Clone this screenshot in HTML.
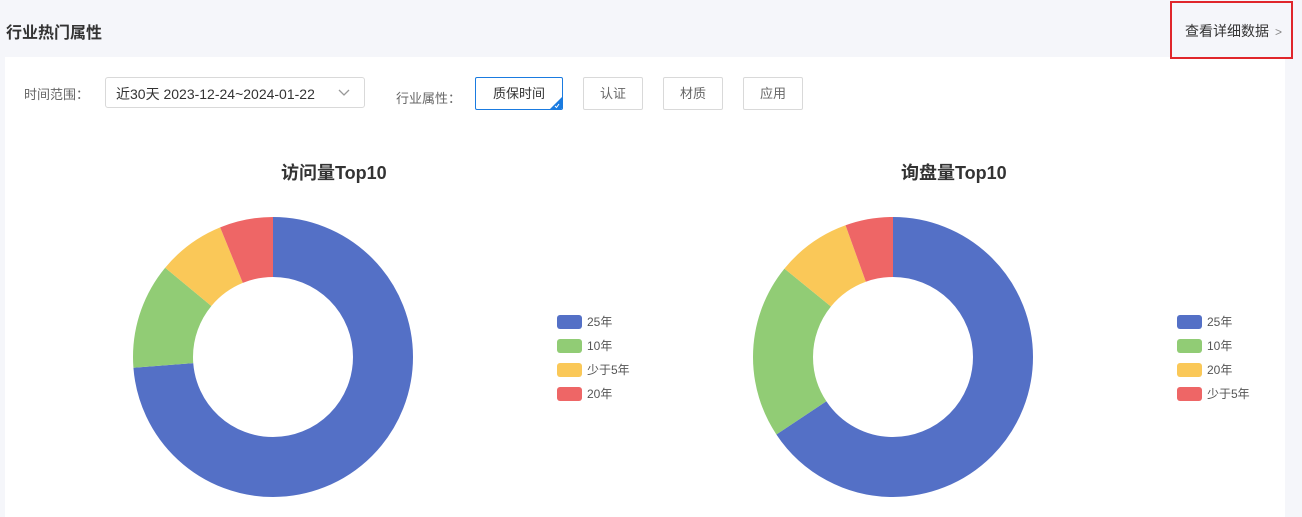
<!DOCTYPE html>
<html><head><meta charset="utf-8"><style>
*{margin:0;padding:0;box-sizing:border-box}
body{width:1302px;height:507px;overflow:hidden;background:#f5f6fa;font-family:"Liberation Sans","Noto Sans CJK SC",sans-serif;position:relative;color:#333}
.title{position:absolute;left:6px;top:19px;font-size:16px;font-weight:bold;color:#333}
.more{position:absolute;left:1170px;top:1px;width:123px;height:58px;border:2px solid #e0262b;font-size:14px;color:#333;padding:18px 0 0 13px;z-index:5}
.more span{color:#888;margin-left:6px;font-size:12px}
.panel{position:absolute;left:5px;top:57px;width:1280px;height:460px;background:#fff}
.lbl{position:absolute;font-size:13px;color:#666;top:88px}
.sel{position:absolute;left:105px;top:77px;width:260px;height:31px;border:1px solid #d9d9d9;border-radius:3px;font-size:14px;color:#333;padding:6px 0 0 10px}
.btn{position:absolute;top:77px;height:33px;border:1px solid #d9d9d9;border-radius:2px;font-size:13px;color:#666;text-align:center;line-height:31px}
.act{border-color:#1a7be0;color:#333;overflow:hidden}
.ct{position:absolute;top:159px;font-size:18px;font-weight:bold;color:#333}
.lg{position:absolute;font-size:12px;color:#555}
.lg div{height:24px;position:relative;padding-left:30px;line-height:14px}
.lg i{position:absolute;left:0;top:0;width:25px;height:14px;border-radius:3px}
</style></head><body>
<div class="title">行业热门属性</div>
<div class="panel"></div>
<div class="more">查看详细数据<span>&gt;</span></div>
<div class="lbl" style="left:24px;top:84px">时间范围：</div>
<div class="sel">近30天 2023-12-24~2024-01-22<svg style="position:absolute;right:14px;top:11px" width="12" height="8"><path d="M1 1l5 5 5-5" fill="none" stroke="#999" stroke-width="1.3"/></svg></div>
<div class="lbl" style="left:396px">行业属性：</div>
<div class="btn act" style="left:475px;width:88px;">质保时间<svg style="position:absolute;right:0;bottom:0" width="12" height="12"><path d="M12 0L12 12L0 12Z" fill="#1a7be0"/><path d="M5 9l1.5 1.5L9 7" stroke="#fff" fill="none" stroke-width="1"/></svg></div>
<div class="btn" style="left:583px;width:60px">认证</div>
<div class="btn" style="left:663px;width:60px">材质</div>
<div class="btn" style="left:743px;width:60px">应用</div>
<div class="ct" style="left:281px">访问量Top10</div>
<div class="ct" style="left:901px">询盘量Top10</div>
<svg style="position:absolute;left:0;top:0" width="1302" height="507">
<g transform="rotate(-90 273 357)" fill="none" stroke-width="60">
<circle cx="273" cy="357" r="110" stroke="#5470c6" stroke-dasharray="509.7 691.15" stroke-dashoffset="0"/>
<circle cx="273" cy="357" r="110" stroke="#91cc75" stroke-dasharray="84.5 691.15" stroke-dashoffset="-509.7"/>
<circle cx="273" cy="357" r="110" stroke="#fac858" stroke-dasharray="54.1 691.15" stroke-dashoffset="-594.2"/>
<circle cx="273" cy="357" r="110" stroke="#ee6666" stroke-dasharray="42.85 691.15" stroke-dashoffset="-648.3"/>
</g>
<g transform="rotate(-90 893 357)" fill="none" stroke-width="60">
<circle cx="893" cy="357" r="110" stroke="#5470c6" stroke-dasharray="453.7 691.15" stroke-dashoffset="0"/>
<circle cx="893" cy="357" r="110" stroke="#91cc75" stroke-dasharray="139.6 691.15" stroke-dashoffset="-453.7"/>
<circle cx="893" cy="357" r="110" stroke="#fac858" stroke-dasharray="59.5 691.15" stroke-dashoffset="-593.3"/>
<circle cx="893" cy="357" r="110" stroke="#ee6666" stroke-dasharray="38.35 691.15" stroke-dashoffset="-652.8"/>
</g>
</svg>
<div class="lg" style="left:557px;top:315px"><div><i style="background:#5470c6"></i>25年</div><div><i style="background:#91cc75"></i>10年</div><div><i style="background:#fac858"></i>少于5年</div><div><i style="background:#ee6666"></i>20年</div></div>
<div class="lg" style="left:1177px;top:315px"><div><i style="background:#5470c6"></i>25年</div><div><i style="background:#91cc75"></i>10年</div><div><i style="background:#fac858"></i>20年</div><div><i style="background:#ee6666"></i>少于5年</div></div>
</body></html>
